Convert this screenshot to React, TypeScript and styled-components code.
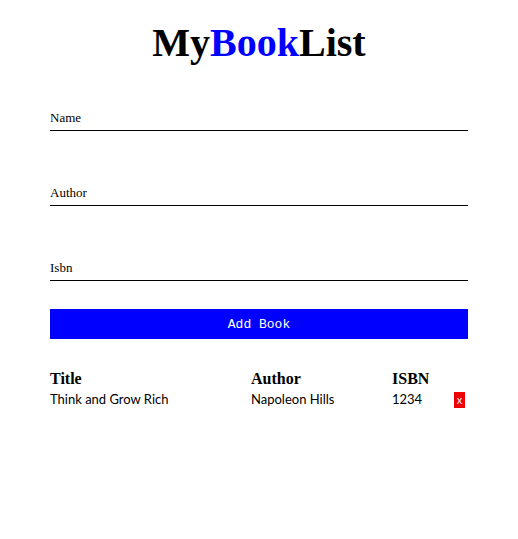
import styled, { createGlobalStyle } from "styled-components";

const GlobalStyle = createGlobalStyle`
    body {
        margin: 0;
        background: #ffffff;
        font-family: "Liberation Serif", serif;
    }
`;

const Page = styled.div`
    width: 418px;
    margin: 0 auto;
    padding-top: 19px;
`;

const Heading = styled.h1`
    height: 48px;
    line-height: 48px;
    margin: 0 0 41px;
    text-align: center;
    font-family: "Liberation Serif", serif;
    font-weight: bold;
    font-size: 40px;
    color: #000;

    span {
        color: #0000ff;
    }
`;

const Field = styled.div<{ $gap: number }>`
    display: flex;
    flex-direction: column;
    height: 23px;
    margin-bottom: ${(p) => p.$gap}px;
`;

const Label = styled.label`
    display: block;
    height: 20px;
    font-family: "Liberation Serif", serif;
    font-size: 13px;
    color: #000;
    line-height: 20px;
`;

const Input = styled.input`
    box-sizing: border-box;
    height: 3px;
    border: none;
    border-bottom: 1px solid #000;
    outline: none;
    padding: 0;
    font-size: 11px;
`;

const AddButton = styled.button`
    display: block;
    width: 100%;
    height: 30px;
    border: none;
    background: #0000ff;
    color: #fff;
    font-family: "Courier New", "Liberation Mono", monospace;
    font-size: 13px;
    cursor: pointer;
`;

const Table = styled.div`
    margin-top: 31px;
    display: grid;
    grid-template-columns: 201px 141px 1fr 14px;
    row-gap: 3px;
`;

const HeadCell = styled.div`
    font-family: "Liberation Serif", serif;
    font-weight: bold;
    font-size: 16px;
    color: #000;
`;

const Cell = styled.div`
    font-family: "Comic Sans MS", "Lato", sans-serif;
    font-size: 13px;
    color: #000;
`;

const DeleteButton = styled.button`
    width: 11px;
    height: 16px;
    padding: 0;
    margin-top: 1px;
    border: none;
    background: #ee0000;
    color: #fff;
    font-family: "Liberation Sans", sans-serif;
    font-size: 11px;
    line-height: 16px;
`;

const books = [{ title: "Think and Grow Rich", author: "Napoleon Hills", isbn: "1234" }];

const App = () => {
    return (
        <>
            <GlobalStyle />
            <Page>
                <Heading>
                    My<span>Book</span>List
                </Heading>
                <Field $gap={52}>
                    <Label>Name</Label>
                    <Input />
                </Field>
                <Field $gap={52}>
                    <Label>Author</Label>
                    <Input />
                </Field>
                <Field $gap={28}>
                    <Label>Isbn</Label>
                    <Input />
                </Field>
                <AddButton>Add Book</AddButton>
                <Table>
                    <HeadCell>Title</HeadCell>
                    <HeadCell>Author</HeadCell>
                    <HeadCell>ISBN</HeadCell>
                    <HeadCell />
                    {books.map((book) => (
                        <>
                            <Cell>{book.title}</Cell>
                            <Cell>{book.author}</Cell>
                            <Cell>{book.isbn}</Cell>
                            <DeleteButton>x</DeleteButton>
                        </>
                    ))}
                </Table>
            </Page>
        </>
    );
};

export default App;
